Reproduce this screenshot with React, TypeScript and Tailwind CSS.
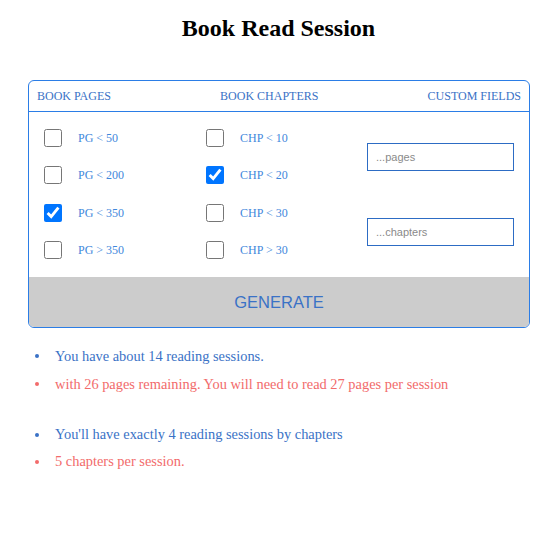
import React from "react";

const pages = [
  { label: "PG < 50", checked: false },
  { label: "PG < 200", checked: false },
  { label: "PG < 350", checked: true },
  { label: "PG > 350", checked: false },
];

const chapters = [
  { label: "CHP < 10", checked: false },
  { label: "CHP < 20", checked: true },
  { label: "CHP < 30", checked: false },
  { label: "CHP > 30", checked: false },
];

function Option({ label, checked }: { label: string; checked: boolean }) {
  return (
    <label className="flex h-[37.5px] items-center gap-4">
      <input
        type="checkbox"
        defaultChecked={checked}
        className="m-0 h-[18px] w-[18px] accent-[#0075ff]"
      />
      <span className="text-[12px] text-[#3f88dc]">{label}</span>
    </label>
  );
}

function Item({ text, color, dot }: { text: string; color: string; dot: string }) {
  return (
    <li className={`flex items-center ${color}`}>
      <span className={`ml-[35px] mr-[16px] h-[4px] w-[4px] rounded-full ${dot}`} />
      {text}
    </li>
  );
}

export default function App() {
  return (
    <div className="min-h-[552px] bg-white font-['Liberation_Serif',serif]">
      <h1 className="pt-[13px] text-center text-[24px] font-bold leading-[30px] text-black">
        Book Read Session
      </h1>

      <div className="ml-[28px] mt-[37px] w-[502px] overflow-hidden rounded-[6px] border border-[#2b7de6]">
        <div className="flex h-[31px] items-center justify-between border-b border-[#2b7de6] px-2 text-[12px] uppercase text-[#3a72c6]">
          <span>Book Pages</span>
          <span>Book Chapters</span>
          <span>Custom Fields</span>
        </div>

        <div className="flex pb-[8px] pl-[15px] pr-[15px] pt-[7px]">
          <div className="flex w-[162px] flex-col">
            {pages.map((o) => (
              <Option key={o.label} {...o} />
            ))}
          </div>
          <div className="flex flex-1 flex-col">
            {chapters.map((o) => (
              <Option key={o.label} {...o} />
            ))}
          </div>
          <div className="flex w-[147px] flex-col">
            {["...pages", "...chapters"].map((p) => (
              <div key={p} className="flex h-[75px] items-center">
                <input
                  type="text"
                  placeholder={p}
                  className="h-[28px] w-full border-[1.5px] border-[#2d6cc4] bg-white px-2 font-['Liberation_Sans',sans-serif] text-[11px] placeholder:text-[#8a8a8a] focus:outline-none"
                />
              </div>
            ))}
          </div>
        </div>

        <button className="flex h-[50px] w-full items-center justify-center bg-[#cccccc] font-['Liberation_Sans',sans-serif] text-[16.5px] text-[#3a72c6]">
          GENERATE
        </button>
      </div>

      <ul className="mt-[14px] text-[14.4px] leading-[28px]">
        <Item text="You have about 14 reading sessions." color="text-[#3a72c6]" dot="bg-[#3a72c6]" />
        <Item
          text="with 26 pages remaining. You will need to read 27 pages per session"
          color="text-[#f26b6b]"
          dot="bg-[#f26b6b]"
        />
      </ul>
      <ul className="mt-[23px] text-[14.4px] leading-[27px]">
        <Item
          text="You'll have exactly 4 reading sessions by chapters"
          color="text-[#3a72c6]"
          dot="bg-[#3a72c6]"
        />
        <Item text="5 chapters per session." color="text-[#f26b6b]" dot="bg-[#f26b6b]" />
      </ul>
    </div>
  );
}
